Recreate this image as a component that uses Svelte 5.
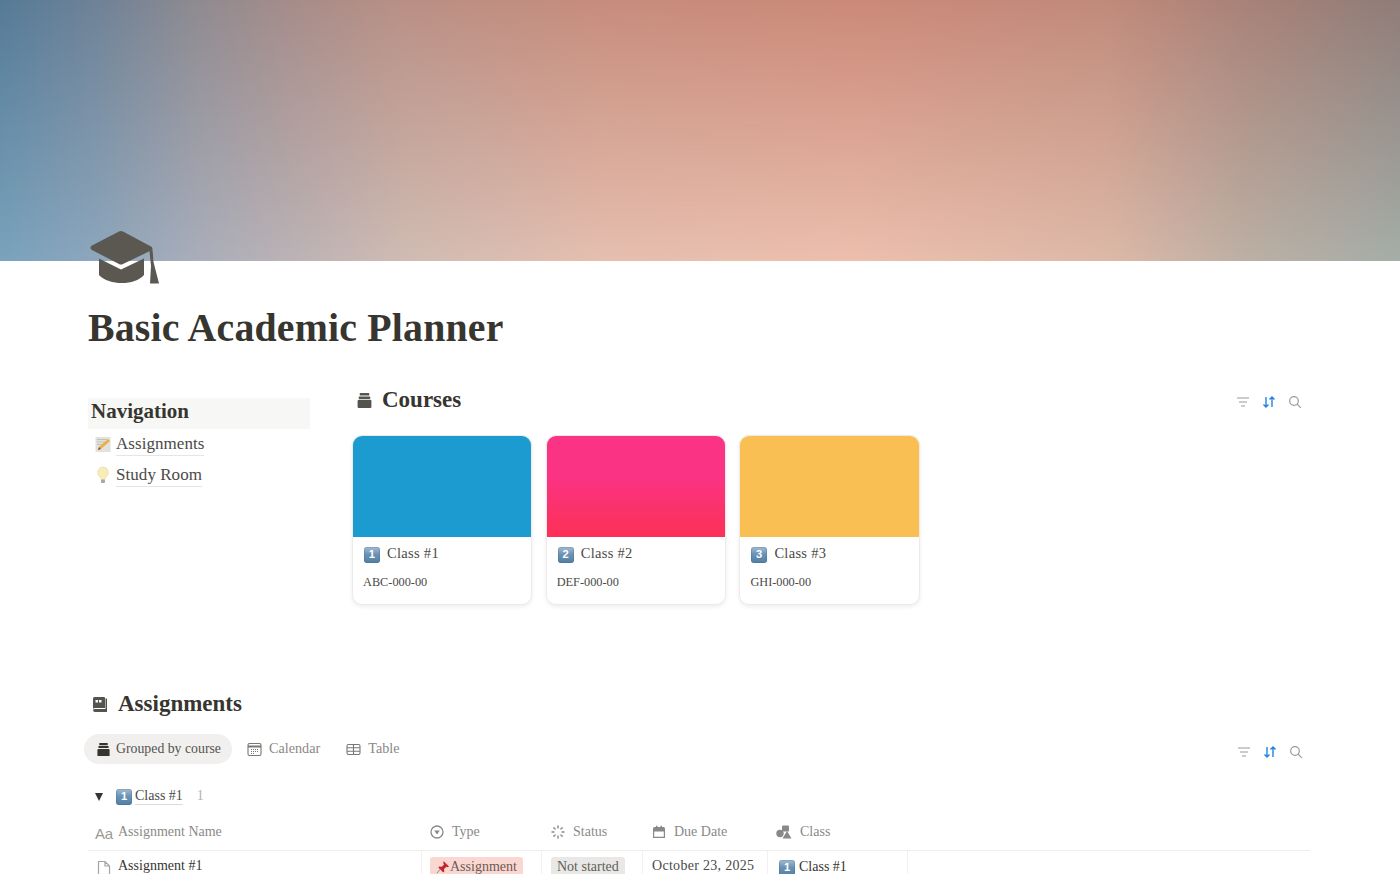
<script>
  const courses = [
    { n: '1', name: 'Class #1', code: 'ABC-000-00', cls: 'blue' },
    { n: '2', name: 'Class #2', code: 'DEF-000-00', cls: 'pink' },
    { n: '3', name: 'Class #3', code: 'GHI-000-00', cls: 'amber' }
  ];
</script>

{#snippet keycap(n, size = 16)}
  <span class="keycap" style="width:{size}px;height:{size}px;font-size:{size * 0.7}px">{n}</span>
{/snippet}

{#snippet box(size, color)}
  <svg width={size} height={size} viewBox="0 0 16 16" fill={color}>
    <rect x="3.5" y="1" width="9" height="2.4" rx=".6" />
    <rect x="2.6" y="4.3" width="10.8" height="2.2" rx=".6" />
    <rect x="1.5" y="7.4" width="13" height="7.6" rx="1" />
  </svg>
{/snippet}

{#snippet tools()}
  <div class="tools">
    <svg width="14" height="14" viewBox="0 0 14 14" fill="none" stroke="#9b9a97" stroke-width="1.2"><path d="M1 3h12M3 7h8M5 11h4" /></svg>
    <svg width="14" height="14" viewBox="0 0 14 14" fill="none" stroke="#2383e2" stroke-width="1.4"><path d="M4 2v10M1.5 9.5 4 12l2.500-2.500M10 12V2M7.500 4.500 10 2l2.500 2.500" /></svg>
    <svg width="14" height="14" viewBox="0 0 14 14" fill="none" stroke="#9b9a97" stroke-width="1.2"><circle cx="6" cy="6" r="4.300" /><path d="m9.200 9.200 3.600 3.600" /></svg>
  </div>
{/snippet}

<div class="page">
  <div class="banner"></div>
  <div class="content">
    <svg class="cap" width="72" height="58" viewBox="0 0 72 58" fill="#5b5852">
      <path d="M3 15.500 30 1.500a4 4 0 0 1 4 0l28 15c2 1 2 3 0 4L34 34a4 4 0 0 1-4 0L3 20c-2-1-2-3.500 0-4.500Z" />
      <path d="M10 28.500 32 39.500 55 28.500V45c-5 5.500-13 8-22 8-9 0-18-2.500-23-8V28.500Z" />
      <path d="M60.500 21 63.500 19.500 64.500 32 70 53.500H61L62 36Z" />
    </svg>
    <h1>Basic Academic Planner</h1>

    <div class="columns">
      <aside>
        <h3 class="nav-title">Navigation</h3>
        <div class="nav-link">
          <svg width="16" height="16" viewBox="0 0 16 16">
            <rect x="0.500" y="1" width="15" height="15" fill="#e3e1dd" />
            <path d="M2 3.500h10M2 6h8M2 8.500h6" stroke="#c3c1bc" />
            <path d="m3 14 1-3 9-8 2 2-9 8Z" fill="#e8b23c" />
            <path d="m3 14 1-3 2 2Z" fill="#7a5a30" />
          </svg>
          <span>Assignments</span>
        </div>
        <div class="nav-link">
          <svg width="16" height="18" viewBox="0 0 16 18">
            <path d="M8 1a5.500 5.500 0 0 0-3 10c.8.7 1 1.500 1 2.500h4c0-1 .2-1.800 1-2.500A5.500 5.500 0 0 0 8 1Z" fill="#f8edb8" stroke="#e6d890" stroke-width=".6" />
            <rect x="6" y="13.500" width="4" height="3.500" rx="1" fill="#a9a69e" />
          </svg>
          <span>Study Room</span>
        </div>
      </aside>

      <section class="courses">
        <div class="head-row">
          <h2 class="section-title small">
            {@render box(17, '#55534e')}
            Courses
          </h2>
          {@render tools()}
        </div>
        <div class="cards">
          {#each courses as c}
            <article class="card">
              <div class="cover {c.cls}"></div>
              <div class="card-name">{@render keycap(c.n)}<span>{c.name}</span></div>
              <div class="card-code">{c.code}</div>
            </article>
          {/each}
        </div>
      </section>
    </div>

    <section class="assignments">
      <h2 class="section-title">
        <svg width="17" height="17" viewBox="0 0 17 17" fill="#55534e">
          <path d="M1 2.500A1.500 1.500 0 0 1 2.500 1H12a1 1 0 0 1 1 1v10H3a2 2 0 0 0-2 1V2.500Z" />
          <path d="M1 14a2 2 0 0 1 2-1h10.500V2.500h1.500V16H3a2 2 0 0 1-2-2Z" />
          <path d="M3.500 4h2.500v2.500H3.500zM7 4h2.500v2.500H7z" fill="#fff" />
        </svg>
        Assignments
      </h2>

      <div class="tabs-row">
        <div class="tabs">
          <div class="tab active">{@render box(15, '#37352f')}<span>Grouped by course</span></div>
          <div class="tab">
            <svg width="15" height="15" viewBox="0 0 15 15" fill="none" stroke="#787774" stroke-width="1.100">
              <rect x="1" y="1.500" width="13" height="12" rx="1.500" />
              <path d="M1 4.500h13" stroke-width="2" />
              <path d="M4 7.500h7M4 9.500h7M4 11.500h4" stroke-dasharray="1 1" />
            </svg>
            <span>Calendar</span>
          </div>
          <div class="tab">
            <svg width="15" height="15" viewBox="0 0 15 15" fill="none" stroke="#787774" stroke-width="1.100">
              <rect x="1" y="2.500" width="13" height="10" rx="1.500" />
              <path d="M1 5.800h13M1 9.200h13M7.500 2.500v10" />
            </svg>
            <span>Table</span>
          </div>
        </div>
        {@render tools()}
      </div>

      <div class="group">
        <span class="tri"></span>
        {@render keycap('1')}
        <span class="group-name">Class #1</span>
        <span class="count">1</span>
      </div>

      <div class="table">
        <div class="row header">
          <div class="cell name">
            <span class="aa">Aa</span><span>Assignment Name</span>
          </div>
          <div class="cell type">
            <svg width="14" height="14" viewBox="0 0 14 14" fill="none" stroke="#8a8985" stroke-width="1.300"><circle cx="7" cy="7" r="6" /><path d="M4.200 5.500h5.600L7 9.500Z" fill="#8a8985" stroke="none" /></svg>
            <span>Type</span>
          </div>
          <div class="cell status">
            <svg width="14" height="14" viewBox="0 0 14 14" fill="none" stroke="#8a8985" stroke-width="1.400" stroke-linecap="round"><path d="M7 1v2M7 11v2M1 7h2M11 7h2M2.800 2.800l1.300 1.300M9.900 9.900l1.300 1.300M2.800 11.200l1.300-1.300M9.900 4.100l1.300-1.300" /></svg>
            <span>Status</span>
          </div>
          <div class="cell date">
            <svg width="14" height="14" viewBox="0 0 14 14" fill="#8a8985"><path d="M1 3.500A1.500 1.500 0 0 1 2.500 2H4V.8h1.500V2h3V.8H10V2h1.500A1.500 1.500 0 0 1 13 3.500V13H1Zm1.200 3v5.300h9.600V6.500Z" /></svg>
            <span>Due Date</span>
          </div>
          <div class="cell cls">
            <svg width="16" height="14" viewBox="0 0 16 14" fill="#8a8985"><rect x="6" y="0.500" width="7" height="6" rx="1" /><circle cx="4" cy="8.500" r="3.700" /><path d="m11 6 4.500 7.500h-9Z" /></svg>
            <span>Class</span>
          </div>
        </div>
        <div class="row body">
          <div class="cell name">
            <svg width="16" height="18" viewBox="0 0 16 18" fill="none" stroke="#a5a4a0" stroke-width="1.200"><path d="M2.500 1.500h6.500l4.500 4.500v11h-11ZM9 1.500V6h4.500" /></svg>
            <span>Assignment #1</span>
          </div>
          <div class="cell type">
            <span class="tag red">
              <svg class="pin" width="14" height="14" viewBox="0 0 14 14">
                <path d="M7.500 1 13 6.500l-1.500.8-1-.6-2.500 2.300.3 2.500-1 1-5-5 1-1 2.500.3L8 4.500l-.7-1.200Z" fill="#c4262e" />
                <path d="M4.500 9 .8 13.200" stroke="#8d8a86" stroke-width="1" />
              </svg>
              Assignment
            </span>
          </div>
          <div class="cell status"><span class="tag grey">Not started</span></div>
          <div class="cell date"><span>October 23, 2025</span></div>
          <div class="cell cls">{@render keycap('1')}<span class="underlined">Class #1</span></div>
        </div>
      </div>
    </section>
  </div>
</div>

<style>
  :global(body) {
    margin: 0;
    background: #fff;
    overflow: hidden;
  }
  .page {
    height: 874px;
    overflow: hidden;
    font-family: "Liberation Serif", serif;
    color: #37352f;
    -webkit-font-smoothing: antialiased;
  }
  .banner {
    position: relative;
    height: 261px;
    background: linear-gradient(90deg, #7aa3bd 0%, #8ea7bd 7%, #a9aebb 14%, #bcb3b6 21%, #d0bcb3 29%, #e6bfb0 43%, #ecbfae 61%, #deb9a8 79%, #bcb0a5 89%, #a5aea8 100%);
  }
  .banner::after {
    content: "";
    position: absolute;
    inset: 0;
    background: linear-gradient(90deg, #557a97 0%, #6f8296 7%, #8e8a90 14%, #a68c89 21%, #b98f85 29%, #c68c7c 43%, #cb8978 61%, #c08a7b 79%, #a88178 89%, #8f7c78 100%);
    -webkit-mask-image: linear-gradient(180deg, #000 0%, transparent 100%);
    mask-image: linear-gradient(180deg, #000 0%, transparent 100%);
  }
  .content {
    padding: 0 90px 0 88px;
  }
  .cap {
    position: relative;
    z-index: 1;
    display: block;
    margin: -31px 0 0 1px;
  }
  h1 {
    margin: 16px 0 0;
    font-size: 39.800px;
    line-height: 48px;
    font-weight: 700;
    color: #37352f;
    letter-spacing: .2px;
  }
  .columns {
    display: flex;
    margin-top: 32px;
  }
  aside {
    width: 222px;
    flex: none;
    padding-top: 14px;
    margin-right: 42px;
  }
  .nav-title {
    margin: 0;
    padding: 0 3px;
    height: 31px;
    line-height: 27px;
    background: #f7f7f5;
    font-size: 21px;
    font-weight: 700;
    color: #37352f;
  }
  .nav-link {
    display: flex;
    align-items: center;
    gap: 5px;
    height: 30.500px;
    padding-left: 7px;
    font-size: 17px;
    letter-spacing: .05px;
    color: #4b4a46;
  }
  .nav-link span {
    border-bottom: 1px solid #e6e5e2;
    line-height: 22px;
    margin-top: 1px;
  }
  .courses {
    flex: 1;
    min-width: 0;
  }
  .head-row {
    display: flex;
    justify-content: space-between;
    align-items: center;
    padding-left: 4px;
    height: 32px;
  }
  .section-title {
    display: flex;
    align-items: center;
    gap: 9px;
    margin: 0;
    font-size: 23px;
    line-height: 32px;
    font-weight: 700;
    color: #37352f;
  }
  .tools {
    display: flex;
    gap: 12px;
    align-items: center;
    padding: 4px 8px 0 0;
  }
  .cards {
    display: flex;
    gap: 13.300px;
    margin-top: 19px;
  }
  .card {
    width: 180.400px;
    height: 170px;
    box-sizing: border-box;
    border: 1px solid #ecebe9;
    border-radius: 10px;
    overflow: hidden;
    background: #fff;
    box-shadow: 0 2px 4px rgba(15, 15, 15, .07);
  }
  .cover {
    height: 101px;
  }
  .blue { background: #1c9bd1; }
  .pink { background: linear-gradient(180deg, #fb3384 0%, #fb3384 40%, #fc3056 100%); }
  .amber { background: #f9bf53; }
  .card-name {
    display: flex;
    align-items: center;
    gap: 7px;
    margin: 7px 0 0 11px;
    height: 18px;
    font-size: 14.500px;
    color: #4b4a46;
    letter-spacing: .3px;
  }
  .card-name .keycap {
    margin-top: 3px;
  }
  .card-code {
    margin: 11px 0 0 10px;
    font-size: 12.300px;
    line-height: 18px;
    color: #4b4a46;
  }
  .keycap {
    display: inline-flex;
    align-items: center;
    justify-content: center;
    flex: none;
    border-radius: 3px;
    background: linear-gradient(180deg, #a5bdd4 0%, #6a93b6 45%, #527fa5 100%);
    color: #fff;
    font-family: "Liberation Sans", sans-serif;
    font-weight: 700;
    line-height: 1;
    box-shadow: inset 0 0 0 1px rgba(60, 90, 120, .25);
  }
  .assignments {
    margin-top: 83px;
  }
  .assignments .section-title {
    padding-left: 4px;
    font-size: 23px;
  }
  .tabs-row {
    display: flex;
    justify-content: space-between;
    align-items: center;
    margin: 14px 0 0 -4px;
    height: 30px;
  }
  .tabs-row .tools {
    padding: 5px 7px 0 0;
  }
  .tabs {
    display: flex;
    align-items: center;
    gap: 4px;
  }
  .tab {
    display: flex;
    align-items: center;
    gap: 7px;
    height: 30px;
    padding: 0 11px;
    border-radius: 15px;
    font-size: 14.200px;
    color: #8a8985;
  }
  .tab span {
    margin-top: -1px;
  }
  .tab.active {
    gap: 5px;
    padding: 0 11px 0 12px;
    background: #f1f0ee;
    color: #55534e;
    font-size: 13.800px;
  }
  .group {
    display: flex;
    align-items: center;
    height: 20px;
    margin-top: 23px;
    padding-left: 7px;
    font-size: 14px;
    color: #4b4a46;
  }
  .tri {
    width: 0;
    height: 0;
    border-left: 4.500px solid transparent;
    border-right: 4.500px solid transparent;
    border-top: 8px solid #37352f;
    margin-right: 13px;
  }
  .group-name {
    margin-left: 3px;
    border-bottom: 1px solid #dedcd8;
    line-height: 17px;
    margin-top: -2px;
  }
  .count {
    margin-left: 14px;
    color: #b5b4b0;
    font-size: 14px;
    margin-top: -2px;
  }
  .table {
    margin-top: 6px;
    width: 1222px;
  }
  .row {
    display: flex;
  }
  .header {
    height: 37px;
    border-bottom: 1px solid #eeeeec;
    color: #8a8985;
    font-size: 14px;
  }
  .cell {
    display: flex;
    align-items: center;
    gap: 7px;
    box-sizing: border-box;
    padding-left: 8px;
    height: 100%;
    white-space: nowrap;
  }
  .header .cell { gap: 8px; }
  .header .status, .header .date { padding-left: 9px; }
  .name { width: 334px; padding-left: 7px; }
  .type { width: 120px; }
  .status { width: 101px; }
  .date { width: 125px; }
  .cls { width: 140px; }
  .aa {
    font-family: "Liberation Sans", sans-serif;
    font-size: 15px;
    color: #9a9995;
    width: 15px;
    margin-top: 3px;
    letter-spacing: -.3px;
  }
  .body {
    height: 40px;
    font-size: 14px;
    color: #37352f;
  }
  .body .cell {
    align-items: flex-start;
    padding-top: 7px;
    border-right: 1px solid #f2f1ef;
  }
  .body .cell.name {
    padding-left: 8px;
    gap: 6px;
  }
  .body .cell.name svg { margin-top: 2px; }
  .body .cell.type { padding-top: 6px; }
  .body .cell.status { padding: 6px 0 0 9px; }
  .body .cell.date { padding-left: 9px; color: #4b4a46; letter-spacing: .3px; }
  .body .cell.cls { padding-left: 11px; gap: 4px; }
  .body .cls .keycap { margin-top: 2px; }
  .tag {
    display: inline-flex;
    align-items: center;
    height: 20px;
    padding: 0 6px;
    border-radius: 3px;
    font-size: 14px;
    line-height: 20px;
    color: #5f5e5a;
  }
  .red { background: #fbd7d2; color: #6e5a57; }
  .grey { background: #e9e8e6; }
  .pin { flex: none; }
  .underlined {
    border-bottom: 1px solid #dedcd8;
    line-height: 17px;
  }
</style>
